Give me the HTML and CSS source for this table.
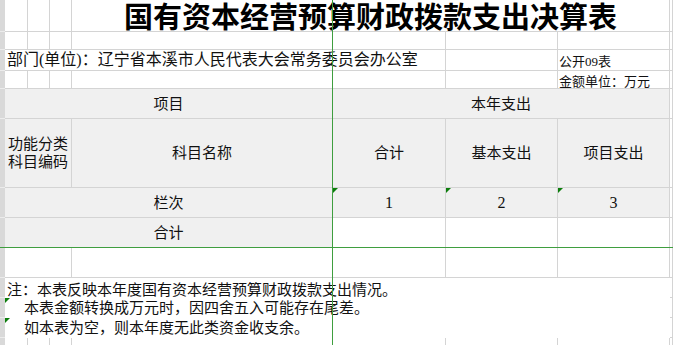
FILE: index.html
```html
<!DOCTYPE html>
<html lang="zh-CN">
<head>
<meta charset="utf-8">
<title>国有资本经营预算财政拨款支出决算表</title>
<link rel="stylesheet" href="styles.css">
</head>
<body>
<div class="sheet">
  <!-- row 1: title -->
  <div class="rh"></div><div class="c"></div><div class="c"></div><div class="c"></div>
  <div class="c s4 title"><span class="title-text">国有资本经营预算财政拨款支出决算表</span></div><div class="c"></div>
  <!-- row 2 -->
  <div class="rh"></div><div class="c"></div><div class="c"></div><div class="c"></div><div class="c"></div><div class="c"></div><div class="c"></div><div class="c"></div><div class="c"></div>
  <!-- row 3 -->
  <div class="rh"></div>
  <div class="c s5 left dept">部门(单位)：辽宁省本溪市人民代表大会常务委员会办公室</div>
  <div class="c"></div>
  <div class="c left small bottom code">公开09表</div>
  <div class="c"></div>
  <!-- row 4 -->
  <div class="rh"></div><div class="c"></div><div class="c"></div><div class="c"></div><div class="c"></div><div class="c"></div><div class="c"></div>
  <div class="c left small bottom unit">金额单位：万元</div>
  <div class="c"></div>
  <!-- row 5 -->
  <div class="rh"></div>
  <div class="c s4 head">项目</div>
  <div class="c s3 head">本年支出</div>
  <div class="c"></div>
  <!-- row 6 -->
  <div class="rh"></div>
  <div class="c s3 head two">功能分类<br>科目编码</div>
  <div class="c head">科目名称</div>
  <div class="c head">合计</div>
  <div class="c head">基本支出</div>
  <div class="c head">项目支出</div>
  <div class="c"></div>
  <!-- row 7 -->
  <div class="rh"></div>
  <div class="c s4 head">栏次</div>
  <div class="c head flag num">1</div>
  <div class="c head flag num">2</div>
  <div class="c head flag num">3</div>
  <div class="c"></div>
  <!-- row 8 -->
  <div class="rh"></div>
  <div class="c s4 head">合计</div>
  <div class="c"></div><div class="c"></div><div class="c"></div><div class="c"></div>
  <!-- row 9 -->
  <div class="rh"></div>
  <div class="c s3"></div><div class="c"></div><div class="c"></div><div class="c"></div><div class="c"></div><div class="c"></div>
  <!-- rows 10-12: notes -->
  <div class="rh"></div>
  <div class="c s7 note note-first">注：本表反映本年度国有资本经营预算财政拨款支出情况。</div>
  <div class="c"></div>
  <div class="rh"></div>
  <div class="c s7 note indent flag">本表金额转换成万元时，因四舍五入可能存在尾差。</div>
  <div class="c"></div>
  <div class="rh"></div>
  <div class="c s7 note indent flag">如本表为空，则本年度无此类资金收支余。</div>
  <div class="c"></div>
  <!-- row 13 -->
  <div class="rh"></div><div class="c tail"></div><div class="c tail"></div><div class="c tail"></div><div class="c tail"></div><div class="c tail"></div><div class="c tail"></div><div class="c tail"></div><div class="c tail"></div>

  <div class="freeze-v"></div>
  <div class="freeze-h"></div>
</div>
</body>
</html>
```
FILE: styles.css
```css
html, body {
  margin: 0;
  padding: 0;
  background: #ffffff;
}

.sheet {
  position: relative;
  display: grid;
  grid-template-columns: 5px 23px 22px 22px 261px 113px 112px 112px 3px;
  grid-template-rows: 32px 18px 21px 18px 30px 69px 30px 30px 30px 20px 20px 20px 10px;
  width: 673px;
  height: 345px;
  overflow: hidden;
  font-family: "Liberation Serif", "Noto Sans CJK SC", serif;
  font-size: 15px;
  color: #111111;
}

.rh {
  background: #d9d9d9;
  border-bottom: 1px solid #ececec;
}

.c {
  box-sizing: border-box;
  border-right: 1px solid #d4d4d4;
  border-bottom: 1px solid #d4d4d4;
  display: flex;
  align-items: center;
  justify-content: center;
  white-space: nowrap;
  min-width: 0;
  line-height: 18px;
}

.s3 { grid-column: span 3; }
.s4 { grid-column: span 4; }
.s5 { grid-column: span 5; }
.s7 { grid-column: span 7; }

.title {
  align-items: flex-start;
}

.title-text {
  display: block;
  font-family: "Noto Sans CJK SC", sans-serif;
  font-weight: 700;
  font-size: 29px;
  line-height: 30px;
  color: #000000;
}

.left {
  justify-content: flex-start;
}

.dept {
  font-size: 16px;
  padding-left: 2px;
}

.small {
  font-size: 13px;
  line-height: 13px;
}

.bottom {
  align-items: flex-end;
}

.code {
  padding-left: 1px;
  padding-bottom: 2px;
}

.unit {
  padding-left: 1px;
}

.head {
  background: #f0f0f0;
}

.num {
  font-size: 16px;
}

.two {
  flex-direction: column;
  text-align: center;
}

.flag {
  position: relative;
}

.flag::before {
  content: "";
  position: absolute;
  top: 0;
  left: 0;
  width: 0;
  height: 0;
  border-top: 5px solid #0b7d0b;
  border-right: 5px solid transparent;
}

.note {
  border: none;
  justify-content: flex-start;
  padding-left: 2px;
}

.note-first {
  align-items: flex-end;
  line-height: 15px;
}

.indent {
  padding-left: 19px;
}

.tail {
  border-bottom: none;
}

.freeze-v {
  position: absolute;
  left: 332px;
  top: 0;
  width: 1px;
  height: 345px;
  background: #3f9e3f;
}

.freeze-h {
  position: absolute;
  left: 0;
  top: 247px;
  width: 673px;
  height: 1px;
  background: #3f9e3f;
}
```
